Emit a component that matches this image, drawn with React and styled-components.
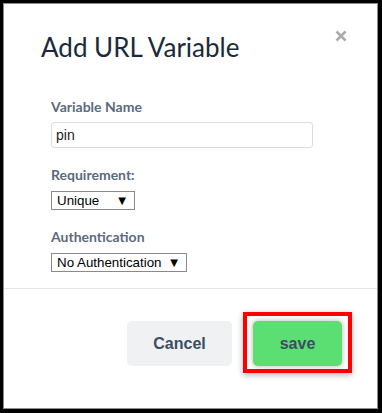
import React from 'react';
import styled, { createGlobalStyle } from 'styled-components';

const GlobalStyle = createGlobalStyle`
  html, body {
    margin: 0;
    padding: 0;
    background: #ffffff;
  }
  * {
    box-sizing: border-box;
  }
`;

const Frame = styled.div`
  width: 382px;
  height: 413px;
  border: 3px solid #000;
  border-right-width: 4px;
  border-bottom-width: 4px;
  display: flex;
`;

const Modal = styled.div`
  flex: 1;
  display: flex;
  flex-direction: column;
  background: #fff;
  border: 1px solid #8d8d8d;
`;

const Header = styled.div`
  display: flex;
  justify-content: space-between;
  align-items: flex-start;
  padding: 28px 30px 0 37px;
`;

const Title = styled.h4`
  margin: 0;
  font-family: Lato, 'Open Sans', sans-serif;
  font-weight: 400;
  font-size: 26px;
  line-height: 30px;
  color: #1b2a3b;
`;

const Close = styled.button`
  border: 0;
  background: none;
  padding: 0;
  margin-top: -2px;
  width: 12px;
  height: 12px;
  display: flex;
  cursor: pointer;
`;

const Body = styled.div`
  display: flex;
  flex-direction: column;
  align-items: flex-start;
  padding: 37px 0 16px 47px;
`;

const Label = styled.label`
  font-family: Lato, 'Open Sans', sans-serif;
  font-weight: 700;
  font-size: 14px;
  line-height: 16px;
  color: #5a6b7c;
  margin-top: ${(p) => (p.first ? '0' : '19px')};
`;

const TextInput = styled.input`
  margin-top: 7px;
  width: 262px;
  height: 26px;
  border: 1px solid #dcdcdc;
  border-radius: 3px;
  padding: 0 4px;
  font-family: 'Liberation Sans', Arial, sans-serif;
  font-size: 14px;
  color: #222;
  outline: none;
`;

const SelectBox = styled.div`
  margin-top: 8px;
  width: ${(p) => p.width}px;
  height: 19px;
  border: 1px solid #8a8a8a;
  display: flex;
  align-items: center;
  justify-content: space-between;
  padding: 0 8px 0 5px;
  font-family: 'Liberation Sans', Arial, sans-serif;
  font-size: 13.33px;
  color: #000;
  background: #fff;
`;

const Arrow = styled.span`
  font-family: 'DejaVu Sans', sans-serif;
  font-size: 10px;
  line-height: 1;
`;

const Footer = styled.div`
  flex: 1;
  border-top: 1px solid #e5e5e5;
  display: flex;
  justify-content: flex-end;
  align-items: flex-start;
  gap: 11px;
  padding: 32px 25px 0 0;
`;

const Button = styled.button`
  width: ${(p) => p.w}px;
  height: 45px;
  border: 0;
  border-radius: 5px;
  background: ${(p) => p.bg};
  color: #3c4e62;
  font-family: 'Liberation Sans', Arial, sans-serif;
  font-weight: 700;
  font-size: 16px;
  box-shadow: ${(p) => (p.glow ? '0 0 5px 1px rgba(0,0,0,0.22)' : 'none')};
  cursor: pointer;
`;

const Highlight = styled.div`
  border: 4px solid #ff0000;
  padding: 5px 6px 3px;
  margin-top: -9px;
  box-shadow: 0 2px 6px rgba(0, 0, 0, 0.3);
  display: flex;
`;

export default function App() {
  return (
    <>
      <GlobalStyle />
      <Frame>
        <Modal>
          <Header>
            <Title>Add URL Variable</Title>
            <Close aria-label="close">
              <svg width="12" height="12" viewBox="0 0 12 12">
                <path d="M1.5 1.5 L10.5 10.5 M10.5 1.5 L1.5 10.5" stroke="#ababab" strokeWidth="2.6" />
              </svg>
            </Close>
          </Header>
          <Body>
            <Label first>Variable Name</Label>
            <TextInput defaultValue="pin" />
            <Label>Requirement:</Label>
            <SelectBox width={84}>
              <span>Unique</span>
              <Arrow>▼</Arrow>
            </SelectBox>
            <Label>Authentication</Label>
            <SelectBox width={136}>
              <span>No Authentication</span>
              <Arrow>▼</Arrow>
            </SelectBox>
          </Body>
          <Footer>
            <Button w={105} bg="#f0f1f3">Cancel</Button>
            <Highlight>
              <Button w={89} bg="#5bde72" glow>save</Button>
            </Highlight>
          </Footer>
        </Modal>
      </Frame>
    </>
  );
}
